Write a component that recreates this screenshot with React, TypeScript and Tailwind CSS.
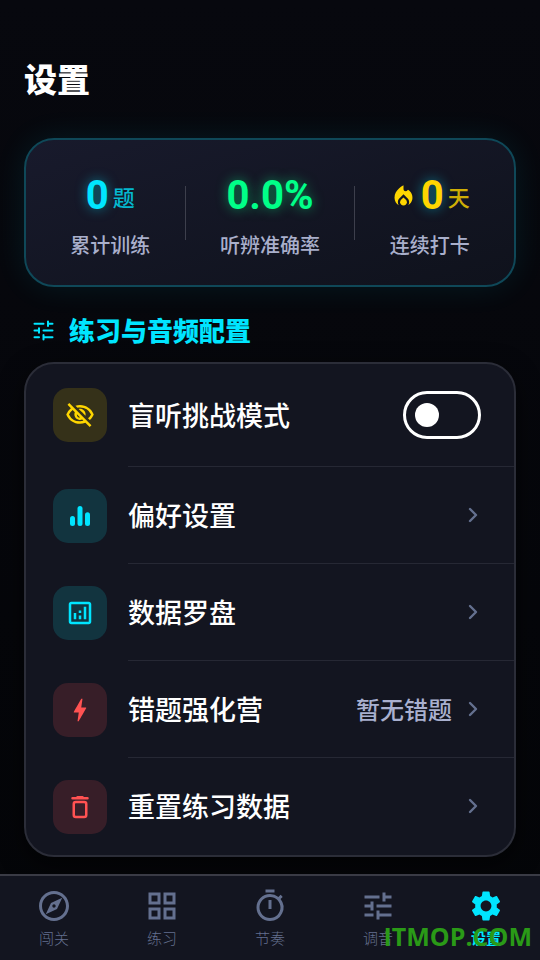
import { useState } from 'react'
import type { ReactNode } from 'react'
import {
  MdLocalFireDepartment,
  MdOutlineAnalytics,
  MdOutlineExplore,
  MdOutlineGridView,
  MdOutlineTimer,
  MdOutlineVisibilityOff,
  MdBolt,
  MdSettings,
  MdTune,
} from 'react-icons/md'

function TuneIcon() {
  return (
    <svg viewBox="0 0 24 24" className="w-[27px] h-[27px]" fill="none" stroke="currentColor" strokeWidth="1.8" strokeLinecap="round">
      <path d="M4 6h8M16 4v4M16 6h4M4 12h4M8 10v4M12 12h8M4 18h4M12 16v4M12 18h8" />
    </svg>
  )
}

function BarsIcon() {
  return (
    <svg viewBox="0 0 24 24" className="w-[30px] h-[30px]" fill="currentColor">
      <rect x="4" y="12" width="4" height="8" rx="2" />
      <rect x="10" y="4" width="4" height="16" rx="2" />
      <rect x="16" y="9" width="4" height="11" rx="2" />
    </svg>
  )
}

function TrashIcon() {
  return (
    <svg viewBox="0 0 24 24" className="w-[30px] h-[30px]" fill="none" stroke="currentColor" strokeWidth="2" strokeLinecap="round" strokeLinejoin="round">
      <rect x="7" y="8" width="10" height="12" rx="1.6" />
      <path d="M6 5h12M10 4.2h4" />
    </svg>
  )
}

function Chevron() {
  return (
    <svg viewBox="0 0 28 28" className="w-7 h-7 text-[#64708f]" fill="none" stroke="currentColor" strokeWidth="2.4" strokeLinecap="round" strokeLinejoin="round">
      <path d="m12 8 6 6-6 6" />
    </svg>
  )
}

function Stat({ label, children }: { label: string; children: ReactNode }) {
  return (
    <div className="flex flex-col items-center gap-1.5">
      <dd className="order-1 flex items-center gap-1 h-[58px]">{children}</dd>
      <dt className="order-2 text-xl leading-7 font-medium text-[#a9afcb]">{label}</dt>
    </div>
  )
}

function Divider() {
  return <div aria-hidden="true" className="w-px h-[54px] self-center bg-[#3d3f4c]" />
}

const tones = {
  yellow: 'bg-[#353119] text-[#ffd600]',
  cyan: 'bg-[#12343f] text-[#00e5ff]',
  red: 'bg-[#371e28] text-[#ff5252]',
}

function Tile({ tone, children }: { tone: keyof typeof tones; children: ReactNode }) {
  return (
    <span className={`flex items-center justify-center shrink-0 w-[54px] h-[54px] rounded-[15px] ${tones[tone]}`}>
      {children}
    </span>
  )
}

const rows: { label: string; tone: keyof typeof tones; icon: ReactNode; value?: string }[] = [
  { label: '偏好设置', tone: 'cyan', icon: <BarsIcon /> },
  { label: '数据罗盘', tone: 'cyan', icon: <MdOutlineAnalytics size={30} /> },
  { label: '错题强化营', tone: 'red', icon: <MdBolt size={30} />, value: '暂无错题' },
  { label: '重置练习数据', tone: 'red', icon: <TrashIcon /> },
]

const tabs = [
  { label: '闯关', icon: <MdOutlineExplore size={36} /> },
  { label: '练习', icon: <MdOutlineGridView size={36} /> },
  { label: '节奏', icon: <MdOutlineTimer size={36} /> },
  { label: '调音', icon: <MdTune size={36} /> },
  { label: '设置', icon: <MdSettings size={36} />, active: true },
]

export default function App() {
  const [blind, setBlind] = useState(false)

  return (
    <div className="min-h-screen flex flex-col bg-linear-to-b from-[#07080e] to-[#040508] text-white font-['Noto_Sans_CJK_SC',sans-serif]">
      <main className="flex-1 px-6 pt-[54px] pb-4">
        <h1 className="text-[33px] leading-[48px] font-black">设置</h1>

        <dl className="mt-9 flex justify-around rounded-[30px] border-2 border-[#0f4858] bg-linear-to-br from-[#181a2c] to-[#0f121c] px-[27px] pt-[27px] pb-[26px] shadow-[0_0_32px_rgba(0,229,255,0.09)]">
          <Stat label="累计训练">
            <span className="font-[Roboto] text-[40px] font-bold text-[#00e5ff] [text-shadow:0_0_12px_rgba(0,229,255,0.5)]">0</span>
            <span className="text-[22px] font-medium text-[#04b7cf]">题</span>
          </Stat>
          <Divider />
          <Stat label="听辨准确率">
            <span className="font-[Roboto] text-[40px] font-bold text-[#00ff88] [text-shadow:0_0_12px_rgba(0,255,136,0.5)]">0.0%</span>
          </Stat>
          <Divider />
          <Stat label="连续打卡">
            <MdLocalFireDepartment size={27} className="text-[#ffd600]" />
            <span className="font-[Roboto] text-[40px] font-bold text-[#ffd600] [text-shadow:0_0_12px_rgba(0,229,255,0.5)]">0</span>
            <span className="text-[22px] font-medium text-[#cfae05]">天</span>
          </Stat>
        </dl>

        <h2 className="mt-[25px] mb-3.5 pl-1.5 flex items-center gap-3 text-[26px] leading-9 font-black text-[#00e5ff]">
          <TuneIcon />
          练习与音频配置
        </h2>

        <section className="rounded-[30px] border-2 border-[#2b2d38] bg-[#131520] shadow-[0_8px_24px_rgba(0,0,0,0.6)]">
          <div className="flex gap-[21px] pl-[27px]">
            <div className="pt-6">
              <Tile tone="yellow"><MdOutlineVisibilityOff size={30} /></Tile>
            </div>
            <div className="flex-1 flex items-center justify-between pt-6 pb-6 pr-[33px] border-b border-[#262834]">
              <label htmlFor="blind" className="text-[27px] leading-[54px] font-medium">盲听挑战模式</label>
              <input
                id="blind"
                type="checkbox"
                role="switch"
                checked={blind}
                onChange={e => setBlind(e.target.checked)}
                className="appearance-none flex items-center w-[78px] h-12 px-[9px] rounded-full border-3 border-white cursor-pointer before:w-6 before:h-6 before:rounded-full before:bg-white checked:justify-end checked:border-[#00e5ff] checked:before:bg-[#00e5ff]"
              />
            </div>
          </div>

          {rows.map(row => (
            <button key={row.label} type="button" className="group w-full flex items-center gap-[21px] pl-[27px] text-left">
              <Tile tone={row.tone}>{row.icon}</Tile>
              <span className="flex-1 flex items-center pt-[21px] pb-[21px] pr-7 border-b border-[#262834] group-last:border-transparent">
                <span className="flex-1 text-[27px] leading-[54px] font-medium">{row.label}</span>
                {row.value && <span className="mr-1.5 text-2xl font-medium text-[#a9b0cf]">{row.value}</span>}
                <Chevron />
              </span>
            </button>
          ))}
        </section>
      </main>

      <nav className="sticky bottom-0 border-t-2 border-[#3a3b45] bg-[#131520]">
        <div className="grid grid-cols-5 py-3">
          {tabs.map(tab => (
            <a
              key={tab.label}
              href="#"
              aria-current={tab.active ? 'page' : undefined}
              className={`flex flex-col items-center gap-1 text-[15px] leading-5 ${tab.active ? 'text-[#00e5ff] font-bold' : 'text-[#64708f] font-light'}`}
            >
              {tab.icon}
              {tab.label}
            </a>
          ))}
        </div>
        <span className="absolute right-2 bottom-1.5 font-['Open_Sans'] text-[25px] leading-9 font-bold text-[#2a9a17]">ITMOP.COM</span>
      </nav>
    </div>
  )
}
